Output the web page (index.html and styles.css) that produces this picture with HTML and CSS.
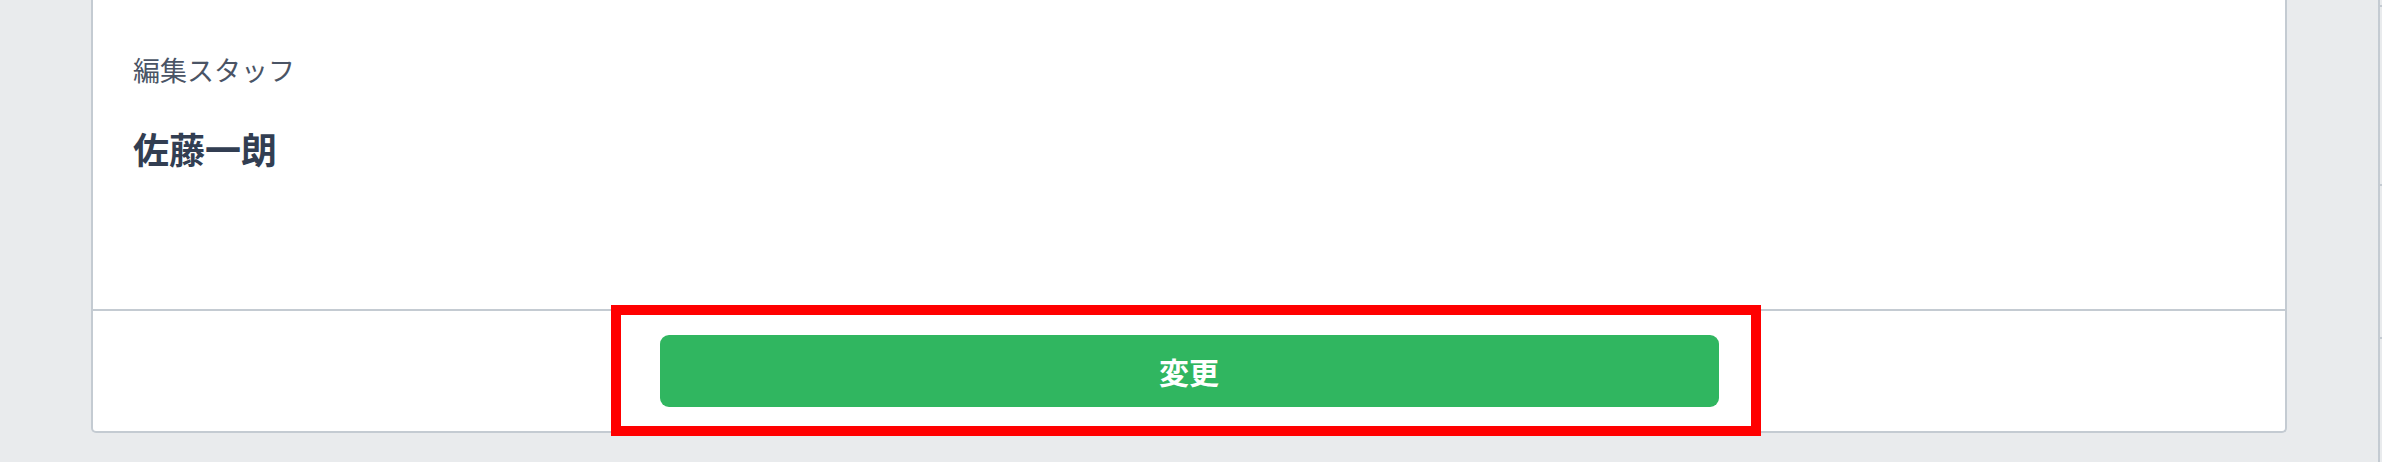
FILE: index.html
```html
<!DOCTYPE html>
<html lang="ja">
<head>
<meta charset="utf-8">
<title>編集スタッフ</title>
<link rel="stylesheet" href="styles.css">
</head>
<body>
<div class="page">
  <main class="card">
    <section class="card-body">
      <div class="field-label">編集スタッフ</div>
      <div class="field-value">佐藤一朗</div>
    </section>
    <footer class="card-footer">
      <button class="btn-submit" type="button">変更</button>
      <div class="annotation"></div>
    </footer>
  </main>
  <aside class="side">
    <div class="side-item side-item-a"></div>
    <div class="side-item side-item-b"></div>
    <div class="side-item side-item-c"></div>
  </aside>
</div>
</body>
</html>
```
FILE: styles.css
```css
html, body {
  margin: 0;
  padding: 0;
}
body {
  background: #e9ebed;
  font-family: "Noto Sans CJK JP", "Noto Sans", sans-serif;
  width: 2382px;
  height: 462px;
  overflow: hidden;
}
.page {
  display: flex;
  align-items: flex-start;
  padding-left: 91px;
  gap: 91px;
}
.card {
  width: 2196px;
  box-sizing: border-box;
  background: #ffffff;
  border: 2px solid #c4cbd2;
  border-top: none;
  border-radius: 0 0 5px 5px;
  flex: none;
}
.card-body {
  padding: 52px 40px 137px;
  border-bottom: 2px solid #c4cbd2;
}
.field-label {
  font-size: 27px;
  line-height: 36px;
  color: #4a5465;
}
.field-value {
  margin-top: 36px;
  font-size: 36px;
  line-height: 48px;
  font-weight: 700;
  color: #323e52;
}
.card-footer {
  position: relative;
  padding: 24px 0;
}
.btn-submit {
  display: block;
  margin: 0 auto;
  width: 1059px;
  height: 72px;
  border: none;
  border-radius: 9px;
  background: #30b660;
  color: #ffffff;
  font-family: "Noto Sans CJK JP", "Noto Sans", sans-serif;
  font-size: 30px;
  font-weight: 700;
  line-height: 72px;
  padding: 0;
}
.annotation {
  position: absolute;
  left: 518px;
  top: -6px;
  width: 1150px;
  height: 131px;
  box-sizing: border-box;
  border: 10px solid #ff0000;
  pointer-events: none;
}
.side {
  flex: 1;
  height: 462px;
  border-left: 2px solid #c4cbd2;
  padding-top: 5px;
  box-sizing: border-box;
}
.side-item {
  border-top: 2px solid #c4cbd2;
}
.side-item-a {
  height: 177px;
}
.side-item-b {
  height: 151px;
}
.side-item-c {
  height: 100px;
}
```
